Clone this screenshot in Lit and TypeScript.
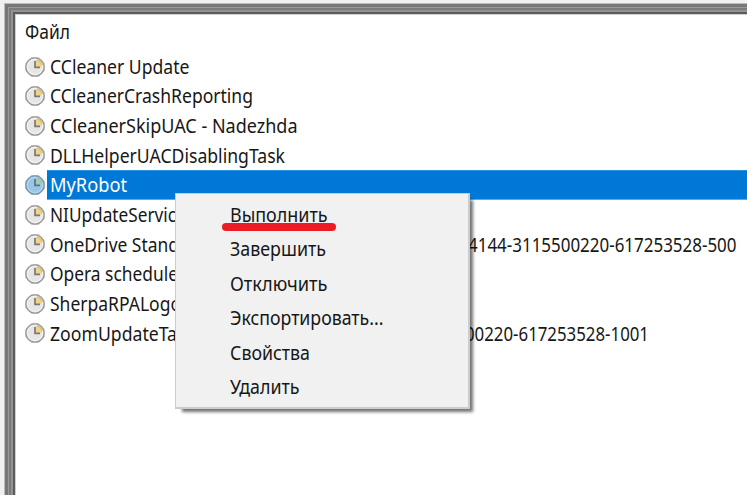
import { LitElement, html, css, svg, nothing } from 'lit';
import { customElement, property } from 'lit/decorators.js';
import { styleMap } from 'lit/directives/style-map.js';

/** A single line of text, condensed or widened to a given width. */
@customElement('fit-text')
class FitText extends LitElement {
  @property() text = '';
  @property({ type: Number }) width = 100;
  static styles = css`
    :host { display: block; white-space: pre; flex: none; }
    .line { display: inline-block; transform-origin: 0 50%; }
  `;
  firstUpdated() {
    const line = this.renderRoot.querySelector('.line') as HTMLElement;
    const natural = line.getBoundingClientRect().width;
    if (natural) line.style.transform = `scaleX(${this.width / natural})`;
  }
  render() {
    return html`<span class="line">${this.text}</span>`;
  }
  updated() {
    this.style.width = `${this.width}px`;
  }
}

@customElement('clock-icon')
class ClockIcon extends LitElement {
  @property({ type: Boolean }) selected = false;
  static styles = css`
    :host { display: block; width: 22px; height: 22px; flex: none; }
    svg { display: block; }
  `;
  render() {
    const s = this.selected;
    return html`<svg width="22" height="22" viewBox="0 0 22 22">
      ${svg`
      <path d="M7.5 .9h7L20.9 7.5v7L14.5 21h-7L1.1 14.5v-7z" fill=${s ? '#7395ae' : '#a8a8a8'} opacity=".6"/>
      <circle cx="11" cy="11" r="9.1" fill=${s ? '#a9cfe9' : '#dedede'} stroke=${s ? '#6f97b4' : '#999'} stroke-width="1.3"/>
      <circle cx="11" cy="11" r="7.6" fill=${s ? '#9ac5e2' : '#e6e6e6'} stroke=${s ? '#b4d6ec' : '#f2f2f2'} stroke-width="1.2"/>
      <path d="M11 11V4a7 7 0 0 1 7 7z" fill=${s ? '#a9c6bd' : '#f5d28c'}/>
      <path d="M13 3.6a8 8 0 0 1 5.2 5.4" fill="none" stroke=${s ? '#a3c1a8' : '#cbc887'} stroke-width="1.8"/>
      <path d="M11 5v6.3h5" fill="none" stroke=${s ? '#4d7894' : '#7d7872'} stroke-width="1.7"/>
      `}
    </svg>`;
  }
}

interface Task { name: string; width: number; tail?: string; tailWidth?: number; tailEnd?: number; selected?: boolean }

const TASKS: Task[] = [
  { name: 'CCleaner Update', width: 139.5 },
  { name: 'CCleanerCrashReporting', width: 203 },
  { name: 'CCleanerSkipUAC - Nadezhda', width: 247.5 },
  { name: 'DLLHelperUACDisablingTask', width: 235 },
  { name: 'MyRobot', width: 77, selected: true },
  { name: 'NIUpdateServic', width: 126 },
  { name: 'OneDrive Stand', width: 129, tail: '4144-3115500220-617253528-500', tailWidth: 268.5, tailEnd: 10.5 },
  { name: 'Opera schedule', width: 128 },
  { name: 'SherpaRPALogo', width: 131 },
  { name: 'ZoomUpdateTa', width: 127, tail: '00220-617253528-1001', tailWidth: 184, tailEnd: 98 },
];

const ACTIONS = [
  { label: 'Выполнить', width: 97.5, marked: true },
  { label: 'Завершить', width: 96 },
  { label: 'Отключить', width: 97.5 },
  { label: 'Экспортировать...', width: 153.5 },
  { label: 'Свойства', width: 80 },
  { label: 'Удалить', width: 69.5 },
];

@customElement('app-root')
class AppRoot extends LitElement {
  static styles = css`
    :host {
      display: block; position: relative; box-sizing: border-box;
      width: 747px; height: 495px; overflow: hidden;
      padding: 3px 0 0 4px; background: #f0f0f0; color: #171717;
      font: 19px/29.67px "Noto Sans", "Open Sans", sans-serif;
    }
    .frame { height: 100%; border: solid #bbb; border-width: 1px 0 0 1px; box-sizing: border-box; }
    .band { height: 100%; border: solid #777; border-width: 3px 0 0 3px; box-sizing: border-box; }
    .groove { height: 100%; border: solid #999; border-width: 1px 0 0 1px; box-sizing: border-box; }
    .inner { height: 100%; border: solid #7b7b7b; border-width: 2px 0 0 2px; box-sizing: border-box; }
    .light { height: 100%; border: solid #929292; border-width: 2px 0 0 2px; box-sizing: border-box; }
    .dark { height: 100%; border: solid #5c5c5c; border-width: 2px 0 0 2px; box-sizing: border-box; }
    .panel { height: 100%; border: solid #d0d0d0; border-width: 1px 0 0 1px; box-sizing: border-box; background: #fff; }
    .heading { height: 36.7px; padding: 3px 0 0 9px; box-sizing: border-box; }
    .row { display: flex; height: 29.67px; align-items: center; padding-left: 8px; }
    .name { display: flex; flex: 1; height: 100%; margin-left: 1px; padding-left: 3px; justify-content: space-between; line-height: 30px; }
    .name.selected { background: #0078d7; color: #fff; box-shadow: inset 0 1px #2b91df, inset 0 -1px #5aaae6; }
    .menu {
      position: absolute; left: 175px; top: 193px; width: 295px; height: 216px;
      box-sizing: border-box; border: 2px solid #ccc; border-top-width: 1px; border-left-width: 1px;
      background: #f1f1f1; box-shadow: 5px 5px 3px -2px rgba(0,0,0,.55);
      padding: 5px 0 0 53.5px; color: #171717;
    }
    .action { position: relative; height: 34.4px; line-height: 32.4px; }
    .mark { position: absolute; left: -7.5px; top: 24px; width: 114px; height: 8px; border-radius: 4px; background: #ed1c24; }
  `;
  render() {
    return html`
      <div class="frame"><div class="band"><div class="groove"><div class="inner"><div class="light"><div class="dark">
        <div class="panel">
          <div class="heading"><fit-text text="Файл" width="45"></fit-text></div>
          ${TASKS.map(t => html`<div class="row">
            <clock-icon ?selected=${!!t.selected}></clock-icon>
            <div class="name ${t.selected ? 'selected' : ''}">
              <fit-text .text=${t.name} .width=${t.width}></fit-text>
              ${t.tail ? html`<fit-text .text=${t.tail} .width=${t.tailWidth!} style=${styleMap({ marginRight: `${t.tailEnd}px` })}></fit-text>` : nothing}
            </div>
          </div>`)}
        </div>
      </div></div></div></div></div></div>
      <div class="menu">
        ${ACTIONS.map(a => html`<div class="action">
          <fit-text .text=${a.label} .width=${a.width}></fit-text>
          ${a.marked ? html`<div class="mark"></div>` : nothing}
        </div>`)}
      </div>`;
  }
}
